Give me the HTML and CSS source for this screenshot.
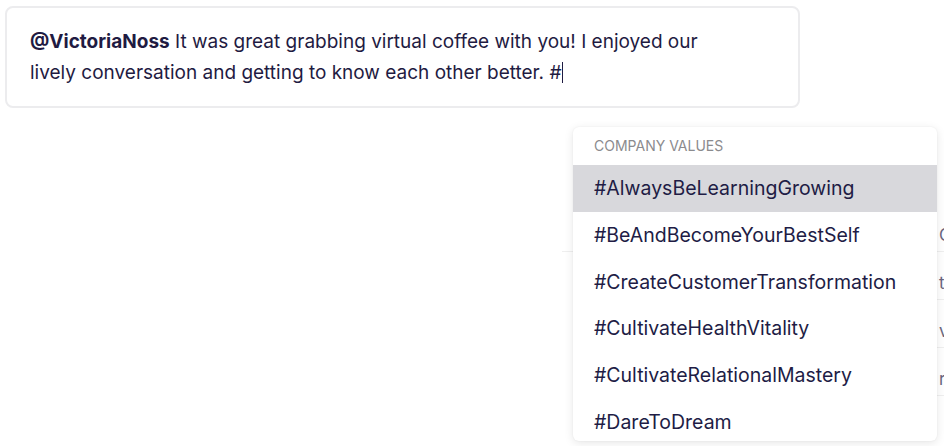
FILE: index.html
```html
<!DOCTYPE html>
<html>
<head>
<meta charset="utf-8">
<link rel="stylesheet" href="styles.css">
</head>
<body>
<div class="page">
  <div class="composer">
    <p class="message"><strong class="mention">@VictoriaNoss</strong> It was great grabbing virtual coffee with you! I enjoyed our<br>lively conversation and getting to know each other better. #<span class="caret"></span></p>
  </div>

  <div class="backdrop">
    <div class="bg-row first"><span class="bg-char">C</span></div>
    <div class="bg-row"><span class="bg-char">t</span></div>
    <div class="bg-row"><span class="bg-char">va</span></div>
    <div class="bg-row"><span class="bg-char">ro</span></div>
  </div>

  <div class="menu">
    <div class="menu-header">COMPANY VALUES</div>
    <ul class="menu-list">
      <li class="menu-item active">#AlwaysBeLearningGrowing</li>
      <li class="menu-item">#BeAndBecomeYourBestSelf</li>
      <li class="menu-item">#CreateCustomerTransformation</li>
      <li class="menu-item">#CultivateHealthVitality</li>
      <li class="menu-item">#CultivateRelationalMastery</li>
      <li class="menu-item">#DareToDream</li>
    </ul>
  </div>
</div>
</body>
</html>
```
FILE: styles.css
```css
html, body {
  margin: 0;
  padding: 0;
  background: #ffffff;
}
body {
  font-family: Inter, "Noto Sans", sans-serif;
  color: #1f1b42;
  width: 944px;
  height: 446px;
  overflow: hidden;
}
.page {
  position: relative;
  width: 944px;
  height: 446px;
  padding: 6px 0 0 5px;
  box-sizing: border-box;
}
.composer {
  width: 795px;
  height: 102px;
  box-sizing: border-box;
  border: 2px solid #ececee;
  border-radius: 8px;
  padding: 18px 20px 0 23px;
}
.message {
  margin: 0;
  font-size: 19px;
  line-height: 31px;
  letter-spacing: 0;
}
.mention {
  font-weight: 700;
}
.caret {
  display: inline-block;
  width: 1px;
  height: 21px;
  background: #1f1b42;
  vertical-align: -4px;
  margin-left: 1px;
}
.backdrop {
  position: absolute;
  left: 573px;
  top: 204px;
  width: 371px;
  height: 260px;
}
.bg-row {
  height: 47px;
  border-bottom: 1px solid #efefef;
  display: flex;
  align-items: flex-end;
  padding-left: 366px;
  font-size: 17px;
  color: #6a6780;
  overflow: hidden;
}
.bg-row.first {
  margin-left: -11px;
  padding-left: 377px;
}
.bg-char {
  padding-bottom: 6px;
}
.menu {
  position: absolute;
  left: 573px;
  top: 127px;
  width: 364px;
  height: 314px;
  background: #ffffff;
  border-radius: 6px;
  box-shadow: 0 2px 10px rgba(0, 0, 0, 0.10), 0 0 2px rgba(0, 0, 0, 0.06);
  overflow: hidden;
}
.menu-header {
  height: 38px;
  box-sizing: border-box;
  padding: 10px 0 0 21px;
  font-size: 14px;
  color: #8b8b8e;
  letter-spacing: 0;
}
.menu-list {
  list-style: none;
  margin: 0;
  padding: 0;
}
.menu-item {
  height: 46.67px;
  display: flex;
  align-items: center;
  padding-left: 21px;
  font-size: 19.5px;
  color: #211c45;
}
.menu-item.active {
  background: #d8d8dc;
}
```
